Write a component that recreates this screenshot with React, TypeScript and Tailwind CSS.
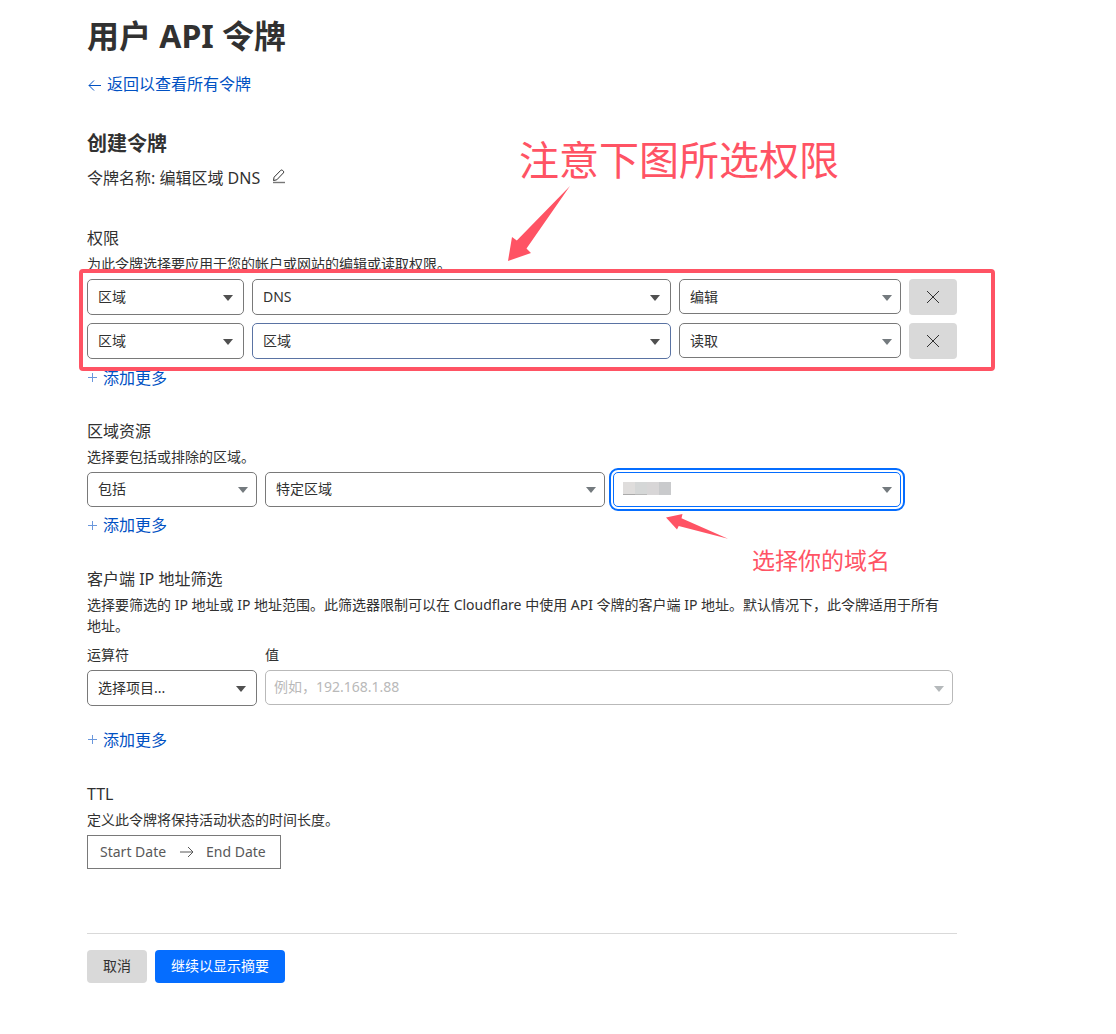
import type { ReactNode, SelectHTMLAttributes } from 'react';
import clsx from 'clsx';

const permissions = [
  { scope: '区域', item: 'DNS', access: '编辑', active: false },
  { scope: '区域', item: '区域', access: '读取', active: true },
];

function Caret({ className }: { className: string }) {
  return (
    <svg
      viewBox="0 0 10 6"
      aria-hidden="true"
      className={clsx('pointer-events-none absolute top-1/2 h-[6px] w-[10px] -translate-y-[2px] fill-current', className)}
    >
      <path d="M0 0h10L5 6z" />
    </svg>
  );
}

type SelectProps = SelectHTMLAttributes<HTMLSelectElement> & {
  options: string[];
  compact?: boolean;
  tone?: string;
};

function Select({ options, compact = false, tone = 'border-[#797979]', ...rest }: SelectProps) {
  return (
    <div className="relative min-w-0">
      <select
        {...rest}
        className={clsx(
          'block w-full appearance-none rounded-[5px] border bg-white pl-[10px] pr-8 text-sm text-[#313131]',
          compact ? 'h-[35px]' : 'h-9',
          tone,
        )}
      >
        {options.map((option) => (
          <option key={option}>{option}</option>
        ))}
      </select>
      <Caret className={compact ? 'right-[9px] text-[#747a7e]' : 'right-[11px] text-[#505050]'} />
    </div>
  );
}

function AddMore() {
  return (
    <a href="#add" className="inline-flex items-center gap-[5px] text-base leading-6 text-[#0051c3]">
      <svg viewBox="0 0 11 11" aria-hidden="true" className="h-[11px] w-[11px] stroke-[#6a97dc]" fill="none">
        <path d="M5.5 1v9M1 5.5h9" strokeWidth="1" />
      </svg>
      添加更多
    </a>
  );
}

function Section({ title, desc, children, className }: { title: string; desc: string; children: ReactNode; className?: string }) {
  return (
    <section className={clsx('relative', className)}>
      <h3 className="text-base leading-6">{title}</h3>
      <p className="mt-[3px] pr-3 text-sm leading-[21px]">{desc}</p>
      {children}
    </section>
  );
}

export default function App() {
  return (
    <main className="min-h-screen bg-white pb-12 pl-[87px] pr-[100px] pt-4 font-['Noto_Sans','Noto_Sans_CJK_SC',sans-serif] text-[#313131]" lang="zh-CN">
      <div className="max-w-[870px]">
        <h1 className="text-[32px] font-bold leading-10">用户 API 令牌</h1>
        <a href="#tokens" className="mt-4 flex items-center gap-[5px] text-base leading-6 text-[#0051c3]">
          <svg viewBox="0 0 15 14" aria-hidden="true" className="mt-[2px] h-[14px] w-[15px] stroke-current" fill="none">
            <path d="M14 7.5H2M7 2.5l-5 5 5 5" strokeWidth="1" />
          </svg>
          返回以查看所有令牌
        </a>

        <h2 className="mt-[34px] text-xl font-bold leading-7">创建令牌</h2>
        <div className="mt-2 flex items-center gap-3">
          <p className="text-base leading-6">令牌名称: 编辑区域 DNS</p>
          <button type="button" aria-label="编辑令牌名称" className="pb-1">
            <svg viewBox="0 0 14 15" aria-hidden="true" className="h-[15px] w-[14px]" fill="none">
              <path d="M1.500 11.500l.6-3.300L8.800 1.300q.9-.7 1.800.1l.8.8q.7.8 0 1.700L4.800 10.800z" stroke="#313131" />
              <path d="M1 13.500h12" stroke="#777" strokeWidth="1.400" />
            </svg>
          </button>
        </div>

        <Section className="mt-9" title="权限" desc="为此令牌选择要应用于您的帐户或网站的编辑或读取权限。">
          <div className="relative mt-[5px] flex flex-col gap-2">
            {permissions.map((row) => (
              <div key={row.access} className="grid grid-cols-[157fr_419fr_222fr_48px] gap-2">
                <Select aria-label="权限范围" options={[row.scope]} />
                <Select aria-label="权限项目" options={[row.item]} tone={row.active ? 'border-[#5a73a3]' : 'border-[#797979]'} />
                <Select aria-label="访问级别" options={[row.access]} compact />
                <button type="button" aria-label="删除" className="flex h-9 items-center justify-center rounded-[4px] bg-[#d9d9d9]">
                  <svg viewBox="0 0 14 14" aria-hidden="true" className="h-[14px] w-[14px]" fill="none">
                    <path d="M1 1l12 12M13 1L1 13" stroke="#313131" strokeWidth="1" />
                  </svg>
                </button>
              </div>
            ))}
            <div className="pointer-events-none absolute -bottom-3 -left-2 -right-[38px] -top-[10px] rounded-[4px] border-4 border-[#ff5364]" />
          </div>
          <div className="mt-[6px]">
            <AddMore />
          </div>
          <p className="absolute -top-[96px] left-[432px] whitespace-nowrap text-[40px] leading-[60px] text-[#ff5364]">注意下图所选权限</p>
          <svg viewBox="0 0 62 75" aria-hidden="true" className="absolute -top-10 left-[421px] h-[75px] w-[62px]">
            <path d="M62 0L18.500 62.500 23 67 0 75 4 51l4.800 3.500z" fill="#ff5364" />
          </svg>
        </Section>

        <Section className="mt-[29px]" title="区域资源" desc="选择要包括或排除的区域。">
          <div className="mt-[5px] grid grid-cols-[170fr_340fr_288fr_48px] gap-2">
            <Select aria-label="包括或排除" options={['包括']} compact />
            <Select aria-label="区域类型" options={['特定区域']} compact />
            <div className="relative">
              <Select
                aria-label="区域"
                options={['']}
                compact
                tone="border-[#056dff] outline-2 outline-offset-2 outline-[#056dff]"
              />
              <div className="pointer-events-none absolute left-[10px] top-[10px] flex h-[13px] w-12">
                <span className="flex-1 border-b border-[#aaa] bg-[#dfdddc]" />
                <span className="flex-1 border-b border-[#b9b9b9] bg-[#d5d7d7]" />
                <span className="flex-1 bg-[#d8d6d7]" />
                <span className="flex-1 bg-[#c9cacc]" />
              </div>
            </div>
          </div>
          <div className="mt-[6px]">
            <AddMore />
          </div>
          <svg viewBox="0 0 62 25" aria-hidden="true" className="absolute left-[579px] top-[95px] h-[25px] w-[62px]">
            <path d="M0 3.500L16.500 0l-1 4.200L62 24.800 12.700 12 11 15.500z" fill="#ff5364" />
          </svg>
          <p className="absolute left-[665px] top-[124px] whitespace-nowrap text-[23px] leading-[34px] text-[#ff5364]">选择你的域名</p>
        </Section>

        <Section
          className="mt-[30px]"
          title="客户端 IP 地址筛选"
          desc="选择要筛选的 IP 地址或 IP 地址范围。此筛选器限制可以在 Cloudflare 中使用 API 令牌的客户端 IP 地址。默认情况下，此令牌适用于所有地址。"
        >
          <div className="mt-2 grid grid-cols-[170fr_688fr] gap-x-2 gap-y-[5px] pr-1">
            <label htmlFor="operator" className="text-sm leading-[21px]">运算符</label>
            <label htmlFor="value" className="text-sm leading-[21px]">值</label>
            <Select id="operator" options={['选择项目...']} />
            <div className="relative">
              <input
                id="value"
                placeholder="例如，192.168.1.88"
                className="block h-[35px] w-full rounded-[5px] border border-[#b9b9b9] pb-[3px] pl-2 pr-8 text-sm placeholder:text-[#b9b9b9]"
              />
              <Caret className="right-[9px] text-[#b5b9bb]" />
            </div>
          </div>
          <div className="mt-[21px]">
            <AddMore />
          </div>
        </Section>

        <Section className="mt-[30px]" title="TTL" desc="定义此令牌将保持活动状态的时间长度。">
          <div className="mt-[5px] inline-flex h-[34px] items-center border border-[#797979] px-3 text-sm">
            <input aria-label="Start Date" placeholder="Start Date" className="w-[72px] placeholder:text-[#595959]" />
            <svg viewBox="0 0 14 12" aria-hidden="true" className="ml-2 mr-3 h-3 w-[14px]" fill="none">
              <path d="M0 6h13M8 1l5 5-5 5" stroke="#595959" />
            </svg>
            <input aria-label="End Date" placeholder="End Date" className="w-[62px] placeholder:text-[#595959]" />
          </div>
        </Section>

        <div className="mt-16 flex gap-2 border-t border-[#d9d9d9] pt-4 text-sm">
          <button type="button" className="h-[33px] rounded-[4px] bg-[#d9d9d9] px-4">取消</button>
          <button type="submit" className="h-[33px] rounded-[4px] bg-[#056dff] px-4 text-white">继续以显示摘要</button>
        </div>
      </div>
    </main>
  );
}
